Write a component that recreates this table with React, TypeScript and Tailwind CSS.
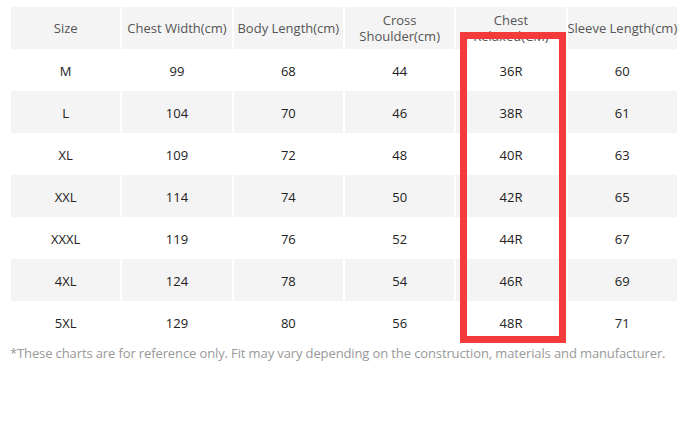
import React from "react";

const rows = [
  ["M", "99", "68", "44", "36R", "60"],
  ["L", "104", "70", "46", "38R", "61"],
  ["XL", "109", "72", "48", "40R", "63"],
  ["XXL", "114", "74", "50", "42R", "65"],
  ["XXXL", "119", "76", "52", "44R", "67"],
  ["4XL", "124", "78", "54", "46R", "69"],
  ["5XL", "129", "80", "56", "48R", "71"],
];

export default function App() {
  return (
    <div
      className="w-[690px] h-[421px] bg-white relative"
      style={{ fontFamily: '"Open Sans", "Noto Sans", sans-serif' }}
    >
      <div className="pt-[7px] pl-[11px]">
        <div className="grid grid-cols-[repeat(6,109.33px)] gap-x-[2px] text-[13px] leading-[16px]">
          <div className="h-[42px] bg-[#f4f4f4] flex items-center justify-center text-[#555]">Size</div>
          <div className="h-[42px] bg-[#f4f4f4] flex items-center justify-center text-[#555] whitespace-nowrap">Chest Width(cm)</div>
          <div className="h-[42px] bg-[#f4f4f4] flex items-center justify-center text-[#555] whitespace-nowrap">Body Length(cm)</div>
          <div className="h-[42px] bg-[#f4f4f4] flex flex-col items-center justify-center text-[#555] text-center">
            <span>Cross</span>
            <span>Shoulder(cm)</span>
          </div>
          <div className="h-[42px] bg-[#f4f4f4] flex flex-col items-center justify-center text-[#555] text-center relative">
            <div className="absolute left-[13px] right-[5px] bottom-0 h-[10px] bg-white" />
            <span className="relative">Chest</span>
            <span className="relative">Relaxed(CM)</span>
          </div>
          <div className="h-[42px] bg-[#f4f4f4] flex items-center justify-center text-[#555] whitespace-nowrap">Sleeve Length(cm)</div>
          {rows.map((r, i) =>
            r.map((c, j) => (
              <div
                key={`${i}-${j}`}
                className={`h-[42px] flex items-center justify-center text-[#222] pt-[2px] ${
                  i % 2 === 1 ? "bg-[#f4f4f4]" : "bg-white"
                }`}
              >
                {c}
              </div>
            ))
          )}
        </div>
      </div>
      <p className="pl-[10px] mt-[1px] text-[13px] leading-[18px] tracking-[-0.12px] text-[#999] whitespace-nowrap">
        *These charts are for reference only. Fit may vary depending on the construction, materials and manufacturer.
      </p>
      <div className="absolute left-[460px] top-[32px] w-[106px] h-[311px] border-[7px] border-[#f43b3b]" />
    </div>
  );
}
